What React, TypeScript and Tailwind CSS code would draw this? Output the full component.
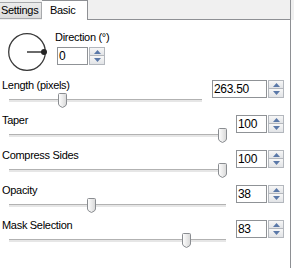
function Arrow({ down }: { down?: boolean }) {
  return (
    <svg width="7" height="4" viewBox="0 0 7 4">
      <path d={down ? "M0,0 H7 L3.5,4 Z" : "M0,4 H7 L3.5,0 Z"} fill="#5a78a8" />
    </svg>
  );
}

function SpinBox({ value, inputClass }: { value: string; inputClass: string }) {
  return (
    <div className="flex h-[18px] gap-[1px]">
      <div
        className={`flex items-center border border-[#8f9296] bg-white pl-[1px] text-[12px] leading-none text-black ${inputClass}`}
      >
        {value}
      </div>
      <div className="flex w-[16px] flex-col">
        <div className="flex h-[9px] items-center justify-center border border-[#b3b7bd] bg-gradient-to-b from-[#f7f7f7] to-[#e2e4e7]">
          <Arrow />
        </div>
        <div className="flex h-[9px] items-center justify-center border border-t-0 border-[#b3b7bd] bg-gradient-to-b from-[#f7f7f7] to-[#e2e4e7]">
          <Arrow down />
        </div>
      </div>
    </div>
  );
}

function Thumb({ left }: { left: number }) {
  return (
    <svg className="absolute top-0" style={{ left }} width="9" height="15" viewBox="0 0 9 15">
      <defs>
        <linearGradient id="thumbFill" x1="0" y1="0" x2="1" y2="0">
          <stop offset="0" stopColor="#ffffff" />
          <stop offset="1" stopColor="#d8d8d8" />
        </linearGradient>
      </defs>
      <path
        d="M1.5,0.5 H7.5 Q8.5,0.5 8.5,1.5 V11 Q8.5,13 4.5,14.5 Q0.5,13 0.5,11 V1.5 Q0.5,0.5 1.5,0.5 Z"
        fill="url(#thumbFill)"
        stroke="#8a8d91"
      />
    </svg>
  );
}

type Row = {
  label: string;
  value: string;
  thumb: number;
  trackClass: string;
  inputClass: string;
};

const rows: Row[] = [
  { label: "Length (pixels)", value: "263.50", thumb: 49, trackClass: "w-[193px]", inputClass: "w-[55px]" },
  { label: "Taper", value: "100", thumb: 209, trackClass: "w-[217px]", inputClass: "w-[31px]" },
  { label: "Compress Sides", value: "100", thumb: 209, trackClass: "w-[217px]", inputClass: "w-[31px]" },
  { label: "Opacity", value: "38", thumb: 78, trackClass: "w-[217px]", inputClass: "w-[31px]" },
  { label: "Mask Selection", value: "83", thumb: 173, trackClass: "w-[217px]", inputClass: "w-[31px]" },
];

function SliderRow({ row }: { row: Row }) {
  return (
    <div className="flex h-[35px] items-start">
      <div className="flex flex-col">
        <div className="h-[13px] pl-[2px] leading-[13px]">{row.label}</div>
        <div className={`relative ml-[9px] mt-[1px] h-[15px] ${row.trackClass}`}>
          <div className="absolute left-0 right-0 top-[6px] h-[3px] border-t border-[#b2b2b2] bg-[#e6e6e6]" />
          <Thumb left={row.thumb} />
        </div>
      </div>
      <div className="ml-auto mr-[6px] mt-[1px]">
        <SpinBox value={row.value} inputClass={row.inputClass} />
      </div>
    </div>
  );
}

export default function App() {
  return (
    <div className="h-[268px] w-[294px] overflow-hidden bg-white font-['Liberation_Sans',Arial,sans-serif] text-[11px] tracking-[-0.3px] text-black">
      <div className="flex h-[20px] bg-[#f0f0f0]">
        <div className="mt-[2px] flex h-[17px] w-[42px] items-center border border-l-0 border-[#a7a9ac] bg-gradient-to-b from-[#ececec] to-[#dcdcdc] pl-[1px]">
          Settings
        </div>
        <div className="h-[20px] w-[46px] border-r border-t border-[#8e9094] bg-white pl-[8px] pt-[1px]">Basic</div>
        <div className="h-[20px] w-[203px] border-b border-r border-[#8e9094]" />
      </div>
      <div className="h-[248px] w-[291px] border-r border-[#8e9094] bg-white">
        <div className="flex h-[59px]">
          <svg className="ml-[8px] mt-[13px]" width="40" height="40" viewBox="0 0 40 40">
            <circle cx="19" cy="19" r="18.3" fill="none" stroke="#3a3a3a" strokeWidth="1.3" />
            <line x1="19" y1="19" x2="36" y2="19" stroke="#6a6a6a" strokeWidth="2" />
            <circle cx="36" cy="19" r="3" fill="#252525" />
          </svg>
          <div className="ml-[7px] flex flex-col">
            <div className="mt-[11px] h-[13px] leading-[13px]">Direction (°)</div>
            <div className="ml-[2px] mt-[3px]">
              <SpinBox value="0" inputClass="w-[31px]" />
            </div>
          </div>
        </div>
        {rows.map((row) => (
          <SliderRow key={row.label} row={row} />
        ))}
      </div>
    </div>
  );
}
